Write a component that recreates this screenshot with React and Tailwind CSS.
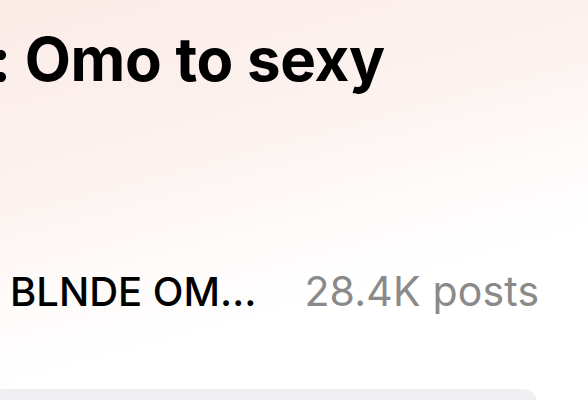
import React from 'react';

const App = () => {
  return (
    <div
      className="w-[588px] h-[400px] overflow-hidden relative bg-[linear-gradient(165deg,#fbebe7_0%,#fcf2ef_35%,#fefbfa_55%,#ffffff_70%)] text-black"
      style={{ fontFamily: 'Inter, "Noto Sans", sans-serif' }}
    >
      {/* Title, cut off on the left */}
      <div className="pt-[19px] ml-[-9px] whitespace-nowrap">
        <h1 className="text-[60px] leading-[80px] font-bold tracking-[-0.3px]">
          : Omo to sexy
        </h1>
      </div>

      {/* Hashtag row */}
      <div className="mt-[167px] pl-[10px] flex items-baseline gap-[48px] whitespace-nowrap">
        <span className="text-[40px] leading-[50px] font-medium tracking-[0px]">
          BLNDE OM…
        </span>
        <span className="text-[41px] leading-[50px] text-[#8a8a8a] tracking-[0.2px]">
          28.4K posts
        </span>
      </div>

      {/* Next card peeking in */}
      <div className="mt-[72px] w-[537px] h-[40px] bg-[#f0f0f2] rounded-tr-[14px]" />
    </div>
  );
};

export default App;
